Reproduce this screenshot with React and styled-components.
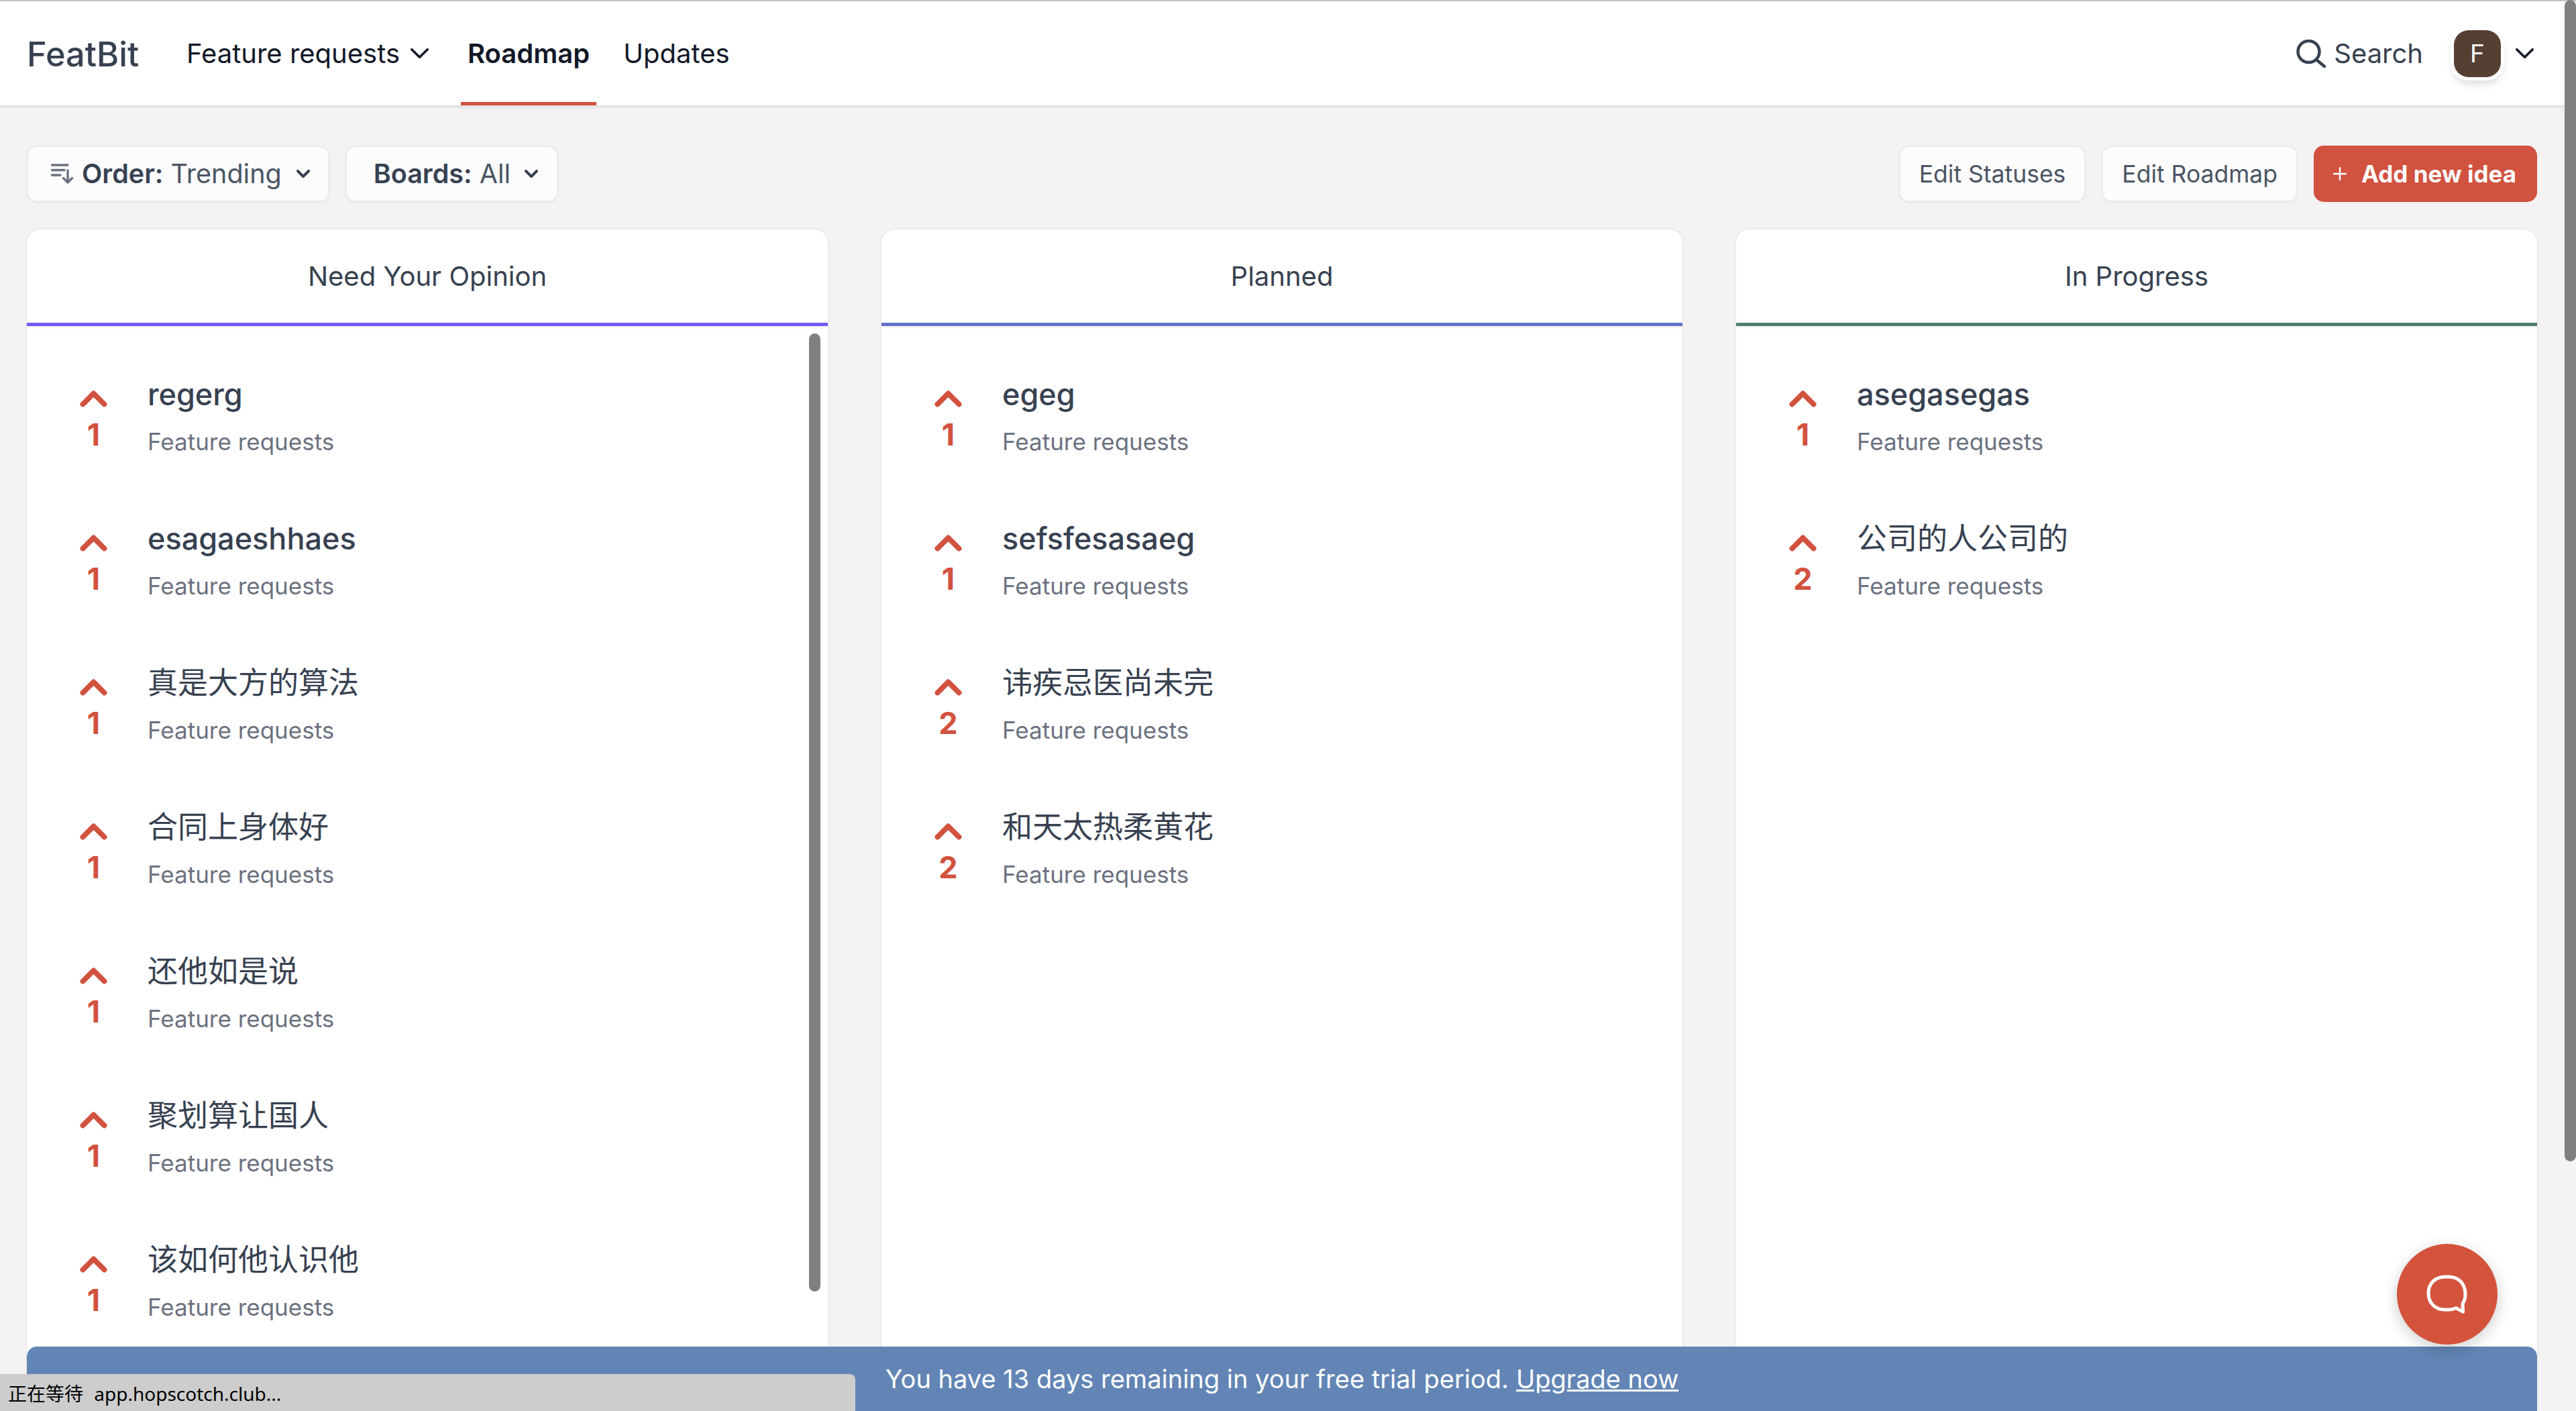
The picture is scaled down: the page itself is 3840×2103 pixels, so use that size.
import React from 'react';
import styled, { createGlobalStyle } from 'styled-components';

const Global = createGlobalStyle`
  html, body { margin: 0; padding: 0; height: 100%; overflow: hidden; background: #f4f2f3; }
  #root { height: 100%; }
  * { box-sizing: border-box; }
  body { font-family: Inter, "Noto Sans CJK SC", sans-serif; color: #374151; }
`;

const Page = styled.div`
  position: relative;
  height: 2103px;
  overflow: hidden;
  display: flex;
  flex-direction: column;
`;
const Nav = styled.header`
  height: 157px;
  flex: none;
  background: #fff;
  border-top: 2px solid #c4c4c4;
  box-shadow: 0 2px 5px rgba(0, 0, 0, 0.12);
  display: flex;
  align-items: stretch;
  padding: 0 63px 0 40px;
  position: relative;
`;
const Logo = styled.div`
  font-size: 50.5px;
  font-weight: 500;
  color: #374151;
  align-self: center;
  margin-top: 1px;
  width: 228px;
`;
const NavItems = styled.nav`
  display: flex;
  gap: 30px;
  align-items: stretch;
`;
const NavItem = styled.a`
  display: flex;
  align-items: center;
  gap: 16px;
  padding: 4px ${p => (p.$menu ? 18 : 10)}px 0 10px;
  font-size: 40px;
  font-weight: ${p => (p.$active ? 600 : 400)};
  color: #111827;
  border-bottom: 5px solid ${p => (p.$active ? '#d1523f' : 'transparent')};
`;
const NavRight = styled.div`
  margin-left: auto;
  display: flex;
  align-items: center;
`;
const SearchBox = styled.div`
  display: flex;
  align-items: center;
  gap: 12px;
  font-size: 40px;
  color: #374151;
  margin-right: 46px;
`;
const Avatar = styled.div`
  width: 70px;
  height: 70px;
  border-radius: 22px;
  background: #553f33;
  color: #fff;
  font-size: 37px;
  display: flex;
  align-items: center;
  justify-content: center;
  box-shadow: 0 0 0 5px #fff, 0 8px 14px rgba(0, 0, 0, 0.18);
  margin-right: 22px;
`;
const Toolbar = styled.div`
  flex: none;
  display: flex;
  align-items: center;
  gap: 24px;
  padding: 60px 58px 41px 40px;
`;
const Pill = styled.button`
  height: 84px;
  display: flex;
  align-items: center;
  gap: ${p => p.$gap || 14}px;
  padding: ${p => p.$pad || '0 28px'};
  background: #fcfcfd;
  border: 2px solid #ececee;
  border-radius: 15px;
  box-shadow: 0 1px 3px rgba(0, 0, 0, 0.07);
  font-family: inherit;
  font-size: ${p => p.$size || 39.5}px;
  color: #4b5563;
  margin-left: ${p => (p.$push ? 'auto' : 0)};
  b { font-weight: 600; color: #374151; }
`;
const SortSlot = styled.span`
  display: flex;
  margin-right: -10px;
`;
const AddButton = styled.button`
  height: 84px;
  display: flex;
  align-items: center;
  gap: 22px;
  padding: 0 31px 0 29px;
  background: #d1523f;
  border: 0;
  border-radius: 15px;
  font-family: inherit;
  font-size: 35px;
  font-weight: 700;
  color: #fff;
`;
const Board = styled.main`
  flex: 1;
  min-height: 0;
  display: grid;
  grid-template-columns: repeat(3, 1fr);
  gap: 80px;
  padding: 0 58px 0 40px;
`;
const Column = styled.section`
  position: relative;
  background: #fff;
  border-radius: 20px 20px 0 0;
  box-shadow: 0 0 3px rgba(0, 0, 0, 0.12);
  display: flex;
  flex-direction: column;
  overflow: hidden;
`;
const ColumnHead = styled.h2`
  margin: 0;
  height: 144px;
  flex: none;
  display: flex;
  align-items: center;
  justify-content: center;
  font-size: 40px;
  font-weight: 400;
  color: #374151;
  border-bottom: 5px solid ${p => p.$color};
  box-shadow: 0 2px 4px rgba(0, 0, 0, 0.06);
`;
const List = styled.div`
  display: flex;
  flex-direction: column;
  padding-top: 72px;
`;
const Thumb = styled.div`
  position: absolute;
  top: 155px;
  right: 11px;
  width: 17px;
  height: 1428px;
  border-radius: 9px;
  background: #808080;
`;
const Row = styled.article`
  height: 215px;
  flex: none;
  display: flex;
  padding-left: 79px;
`;
const Vote = styled.div`
  width: 41px;
  display: flex;
  flex-direction: column;
  align-items: center;
  color: #d1523f;
  font-size: 45px;
  font-weight: 700;
  line-height: 54px;
  gap: 14px;
  padding-top: 24px;
  margin-right: 60px;
`;
const Title = styled.div`
  font-size: 45px;
  font-weight: ${p => (p.$cjk ? 400 : 500)};
  line-height: 60px;
  color: #374151;
`;
const Sub = styled.div`
  font-size: 35px;
  line-height: 50px;
  color: #6b7280;
  margin-top: 15px;
`;
const Banner = styled.div`
  position: absolute;
  left: 40px;
  right: 58px;
  bottom: 0;
  height: 96px;
  background: #6285b5;
  border-radius: 15px 15px 0 0;
  color: #fff;
  font-size: 38px;
  display: flex;
  align-items: center;
  justify-content: center;
  a { color: #fff; text-decoration: underline; margin-left: 11px; }
`;
const StatusBar = styled.div`
  position: absolute;
  left: 0;
  bottom: 0;
  width: 1275px;
  height: 55px;
  background: #cdcdcd;
  border-top-right-radius: 8px;
  color: #000;
  font-size: 28px;
  line-height: 58px;
  word-spacing: 9px;
  padding-left: 12px;
  font-family: "Noto Sans", "Noto Sans CJK SC", sans-serif;
`;
const ChatButton = styled.div`
  position: absolute;
  left: 3573px;
  top: 1854px;
  width: 150px;
  height: 150px;
  border-radius: 50%;
  background: #d4533c;
  box-shadow: 0 6px 22px rgba(0, 0, 0, 0.2);
  display: flex;
  align-items: center;
  justify-content: center;
`;
const PageThumb = styled.div`
  position: absolute;
  top: 0;
  left: 3823px;
  width: 17px;
  height: 1731px;
  border-radius: 9px;
  background: #808080;
`;

const ChevronDown = ({ sw = 3.6, color = '#111827', w = 27, h = 15 }) => (
  <svg width={w} height={h} viewBox={`0 0 ${w} ${h}`} fill="none" stroke={color} strokeWidth={sw} strokeLinecap="round" strokeLinejoin="round">
    <path d={`M${sw / 2} ${sw / 2} L${w / 2} ${h - sw / 2} L${w - sw / 2} ${sw / 2}`} />
  </svg>
);
const SearchIcon = () => (
  <svg width="44" height="42" viewBox="0 0 44 42" fill="none" stroke="#374151" strokeWidth="4.5" strokeLinecap="round">
    <circle cx="18.5" cy="18" r="16" />
    <path d="M30 30 L42 40" />
  </svg>
);
const SortIcon = () => (
  <svg width="34" height="30" viewBox="0 0 34 30" fill="none" stroke="#6b7280" strokeWidth="3.4" strokeLinecap="round" strokeLinejoin="round">
    <path d="M1.5 2 H25 M1.5 9.5 H20 M1.5 17 H14" />
    <path d="M25 10 V28 M18.5 21.5 L25 28 L31.5 21.5" />
  </svg>
);
const PlusIcon = () => (
  <svg width="20" height="20" viewBox="0 0 20 20" stroke="#fff" strokeWidth="2.4" strokeLinecap="round">
    <path d="M10 1 V19 M1 10 H19" />
  </svg>
);
const UpArrow = () => (
  <svg width="41" height="25" viewBox="0 0 41 25" fill="none" stroke="#d1523f" strokeWidth="8" strokeLinecap="round" strokeLinejoin="round">
    <path d="M4.5 20.5 L20.5 4.5 L36.5 20.5" />
  </svg>
);
const ChatIcon = () => (
  <svg width="62" height="58" viewBox="0 0 62 58" fill="none" stroke="#fff" strokeWidth="5" strokeLinecap="round" strokeLinejoin="round">
    <path d="M28 3 H33 C48 3 58 13 58 29 C58 35 57 39 54 43 L54.5 55 L44 49.5 C41 51 37 52 33 52 H28 C13 52 3 42 3 27.5 C3 13 13 3 28 3 Z" />
  </svg>
);

const columns = [
  {
    name: 'Need Your Opinion',
    color: '#7658f5',
    thumb: true,
    items: [
      ['regerg', 1], ['esagaeshhaes', 1], ['真是大方的算法', 1], ['合同上身体好', 1],
      ['还他如是说', 1], ['聚划算让国人', 1], ['该如何他认识他', 1],
    ],
  },
  {
    name: 'Planned',
    color: '#6272c9',
    items: [['egeg', 1], ['sefsfesasaeg', 1], ['讳疾忌医尚未完', 2], ['和天太热柔黄花', 2]],
  },
  {
    name: 'In Progress',
    color: '#4f7f72',
    items: [['asegasegas', 1], ['公司的人公司的', 2]],
  },
];

const isCjk = text => /[\u4e00-\u9fff]/.test(text);

export default function App() {
  return (
    <Page>
      <Global />
      <Nav>
        <Logo>FeatBit</Logo>
        <NavItems>
          <NavItem $menu>Feature requests <ChevronDown /></NavItem>
          <NavItem $active>Roadmap</NavItem>
          <NavItem>Updates</NavItem>
        </NavItems>
        <NavRight>
          <SearchBox><SearchIcon />Search</SearchBox>
          <Avatar>F</Avatar>
          <ChevronDown />
        </NavRight>
      </Nav>
      <Toolbar>
        <Pill $pad="0 27px 0 34px" $gap={22}>
          <SortSlot><SortIcon /></SortSlot>
          <span><b>Order:</b> Trending</span>
          <ChevronDown w={20} h={12} sw={4} color="#374151" />
        </Pill>
        <Pill $pad="0 28px 0 40px" $gap={21}>
          <span><b>Boards:</b> All</span>
          <ChevronDown w={20} h={12} sw={4} color="#374151" />
        </Pill>
        <Pill $push $size={35.5}>Edit Statuses</Pill>
        <Pill $size={35.5}>Edit Roadmap</Pill>
        <AddButton><PlusIcon />Add new idea</AddButton>
      </Toolbar>
      <Board>
        {columns.map(col => (
          <Column key={col.name}>
            <ColumnHead $color={col.color}>{col.name}</ColumnHead>
            {col.thumb && <Thumb />}
            <List>
              {col.items.map(([title, votes]) => (
                <Row key={title}>
                  <Vote><UpArrow />{votes}</Vote>
                  <div>
                    <Title $cjk={isCjk(title)}>{title}</Title>
                    <Sub>Feature requests</Sub>
                  </div>
                </Row>
              ))}
            </List>
          </Column>
        ))}
      </Board>
      <Banner>You have 13 days remaining in your free trial period.<a>Upgrade now</a></Banner>
      <StatusBar>正在等待 app.hopscotch.club...</StatusBar>
      <ChatButton><ChatIcon /></ChatButton>
      <PageThumb />
    </Page>
  );
}
